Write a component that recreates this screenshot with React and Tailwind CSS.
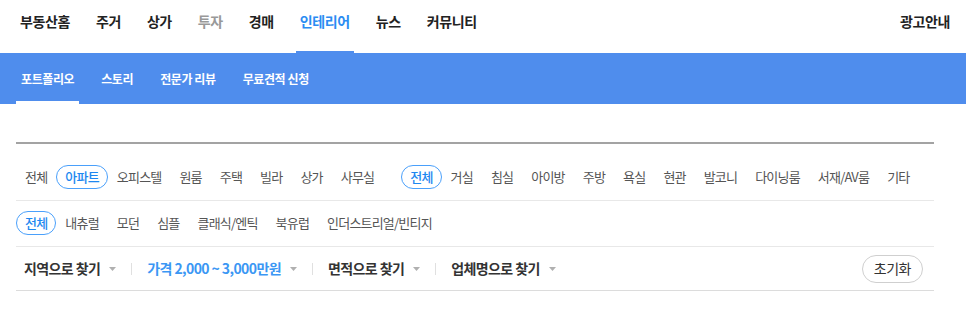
const topMenu = [
    { label: '부동산홈' },
    { label: '주거' },
    { label: '상가' },
    { label: '투자', muted: true },
    { label: '경매' },
    { label: '인테리어', active: true },
    { label: '뉴스' },
    { label: '커뮤니티' },
];

const subMenu = ['포트폴리오', '스토리', '전문가 리뷰', '무료견적 신청'];

const buildingTypes = ['전체', '아파트', '오피스텔', '원룸', '주택', '빌라', '상가', '사무실'];
const spaces = ['전체', '거실', '침실', '아이방', '주방', '욕실', '현관', '발코니', '다이닝룸', '서재/AV룸', '기타'];
const styles = ['전체', '내츄럴', '모던', '심플', '클래식/엔틱', '북유럽', '인더스트리얼/빈티지'];

const FilterChip = ({ label, selected }) => (
    <button
        className={`h-[24px] px-2 border rounded-full text-[13px] leading-[22px] tracking-[-0.8px] whitespace-nowrap ${
            selected ? 'border-[#4aa0fb] text-[#1e88f0] font-medium' : 'border-transparent text-[#555]'
        }`}
    >
        {label}
    </button>
);

const Caret = () => (
    <svg width="7" height="4" viewBox="0 0 7 4" className="ml-[9px]">
        <path d="M0 0h7L3.5 4z" fill="#b0b0b0" />
    </svg>
);

const Divider = () => <span className="mx-[7px] w-px h-[12px] bg-[#e0e0e0]" />;

const DropFilter = ({ label, highlight }) => (
    <button
        className={`flex items-center px-2 text-[14px] font-bold tracking-[-0.6px] whitespace-pre ${
            highlight ? 'text-[#3b97f4]' : 'text-[#333]'
        }`}
    >
        {label}
        <Caret />
    </button>
);

export default function App() {
    return (
        <div className="w-[966px] h-[311px] bg-white font-['Noto_Sans_CJK_KR','Noto_Sans',sans-serif] overflow-hidden">
            {/* 상단 메뉴 */}
            <header className="h-[53px] px-4 flex justify-between">
                <nav className="flex gap-[18px]">
                    {topMenu.map((m) => (
                        <a
                            key={m.label}
                            href="#"
                            className={`h-full px-1 pt-[11px] text-[14px] leading-[20px] font-bold tracking-[-0.4px] border-b-2 ${
                                m.active
                                    ? 'border-[#4f8ded] text-[#2b8cf2]'
                                    : m.muted
                                    ? 'border-transparent text-[#999]'
                                    : 'border-transparent text-[#222]'
                            }`}
                        >
                            {m.label}
                        </a>
                    ))}
                </nav>
                <a href="#" className="pt-[11px] text-[14px] leading-[20px] font-bold tracking-[-0.4px] text-[#222]">
                    광고안내
                </a>
            </header>

            {/* 인테리어 서브 메뉴 */}
            <div className="h-[51px] bg-[#4f8ded]">
                <div className="h-full px-4 flex gap-[17px]">
                    {subMenu.map((s, i) => (
                        <a
                            key={s}
                            href="#"
                            className={`h-full flex items-center px-[5px] text-[12px] font-bold tracking-[-0.4px] text-white whitespace-pre border-y-[3px] border-t-transparent ${
                                i === 0 ? 'border-b-white' : 'border-b-transparent'
                            }`}
                        >
                            {s}
                        </a>
                    ))}
                </div>
            </div>

            {/* 필터 */}
            <div className="mx-4 mt-[38px] w-[918px] border-t-2 border-[#a3a3a3]">
                <div className="flex items-center pt-[21px] pb-[11px] border-b border-[#e8e8e8]">
                    <div className="flex">
                        {buildingTypes.map((t) => (
                            <FilterChip key={t} label={t} selected={t === '아파트'} />
                        ))}
                    </div>
                    <div className="flex ml-[18px]">
                        {spaces.map((t) => (
                            <FilterChip key={t} label={t} selected={t === '전체'} />
                        ))}
                    </div>
                </div>

                <div className="flex items-center pt-[10px] pb-[11px] border-b border-[#e8e8e8]">
                    {styles.map((t) => (
                        <FilterChip key={t} label={t} selected={t === '전체'} />
                    ))}
                </div>

                <div className="flex items-center justify-between h-[44px] border-b border-[#dcdcdc]">
                    <div className="flex items-center">
                        <DropFilter label="지역으로 찾기" />
                        <Divider />
                        <DropFilter label="가격 2,000 ~ 3,000만원" highlight />
                        <Divider />
                        <DropFilter label="면적으로 찾기" />
                        <Divider />
                        <DropFilter label="업체명으로 찾기" />
                    </div>
                    <button className="mr-[11px] h-[28px] px-[11px] rounded-full border border-[#cfcfcf] text-[14px] tracking-[-0.5px] text-[#333]">
                        초기화
                    </button>
                </div>
            </div>
        </div>
    );
}
